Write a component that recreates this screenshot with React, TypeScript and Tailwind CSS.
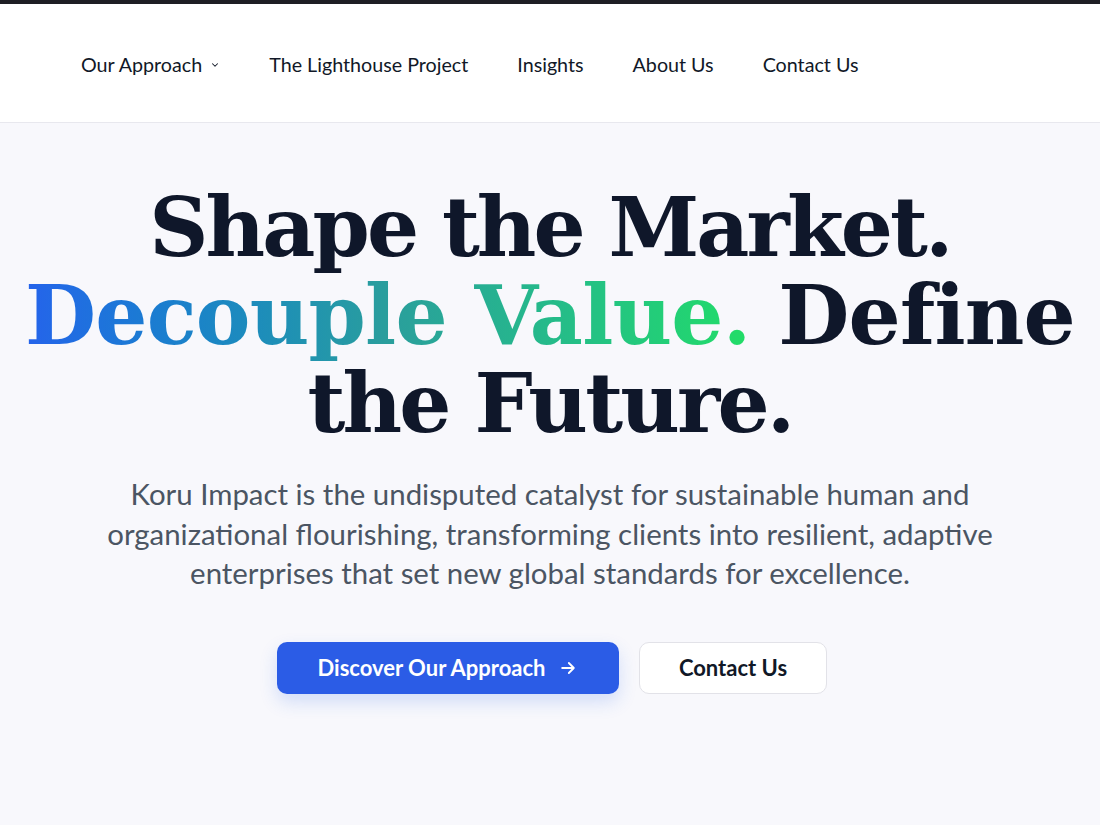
import React from "react";

export default function App() {
  return (
    <div className="min-h-[825px] w-full bg-[#f8f8fc]" style={{ fontFamily: "Lato, 'Noto Sans', sans-serif" }}>
      <div className="h-[4px] w-full bg-[#1e1e24]" />
      <nav className="flex h-[119px] items-center border-b border-[#e8e8ee] bg-white pl-[81px] pt-[3px]">
        <ul className="flex items-center gap-[49px] text-[19.7px] text-[#111827]">
          <li className="flex items-center gap-[8px]">
            <span>Our Approach</span>
            <svg width="10" height="10" viewBox="0 0 24 24" fill="none" stroke="currentColor" strokeWidth="2.5" strokeLinecap="round" strokeLinejoin="round" className="mt-[2px]">
              <path d="M6 9l6 6 6-6" />
            </svg>
          </li>
          <li>The Lighthouse Project</li>
          <li>Insights</li>
          <li>About Us</li>
          <li>Contact Us</li>
        </ul>
      </nav>
      <main className="flex flex-col items-center pt-[60px]">
        <h1
          className="text-center text-[82px] font-bold leading-[88px] text-[#0f172a]"
          style={{ fontFamily: "'DejaVu Serif', 'Liberation Serif', serif" }}
        >
          <span className="tracking-[-2.9px]">Shape the Market.</span>
          <br />
          <span className="tracking-[-0.8px]">
            <span className="bg-gradient-to-r from-[#2563eb] via-[#2a9e9c] to-[#22dd66] bg-clip-text text-transparent">
              Decouple Value.
            </span>{" "}
            Define
          </span>
          <br />
          <span className="tracking-[-2.8px]">the Future.</span>
        </h1>
        <p className="mt-[27px] text-center text-[29.4px] leading-[39.5px] text-[#4b5563]">
          Koru Impact is the undisputed catalyst for sustainable human and
          <br />
          organizational flourishing, transforming clients into resilient, adaptive
          <br />
          enterprises that set new global standards for excellence.
        </p>
        <div className="mt-[49px] flex items-center gap-[20px] pl-[4px]">
          <button className="flex h-[52px] w-[342px] items-center justify-center gap-[13px] rounded-[10px] bg-[#2b5ce6] text-[22px] font-bold text-white shadow-[0_8px_18px_rgba(37,99,235,0.18)]">
            <span>Discover Our Approach</span>
            <svg width="20" height="20" viewBox="0 0 24 24" fill="none" stroke="currentColor" strokeWidth="2.2" strokeLinecap="round" strokeLinejoin="round">
              <path d="M5 12h14M13 6l6 6-6 6" />
            </svg>
          </button>
          <button className="flex h-[52px] w-[188px] items-center justify-center rounded-[10px] border border-[#e2e2e8] bg-white text-[22px] font-bold text-[#111827]">
            Contact Us
          </button>
        </div>
      </main>
    </div>
  );
}
